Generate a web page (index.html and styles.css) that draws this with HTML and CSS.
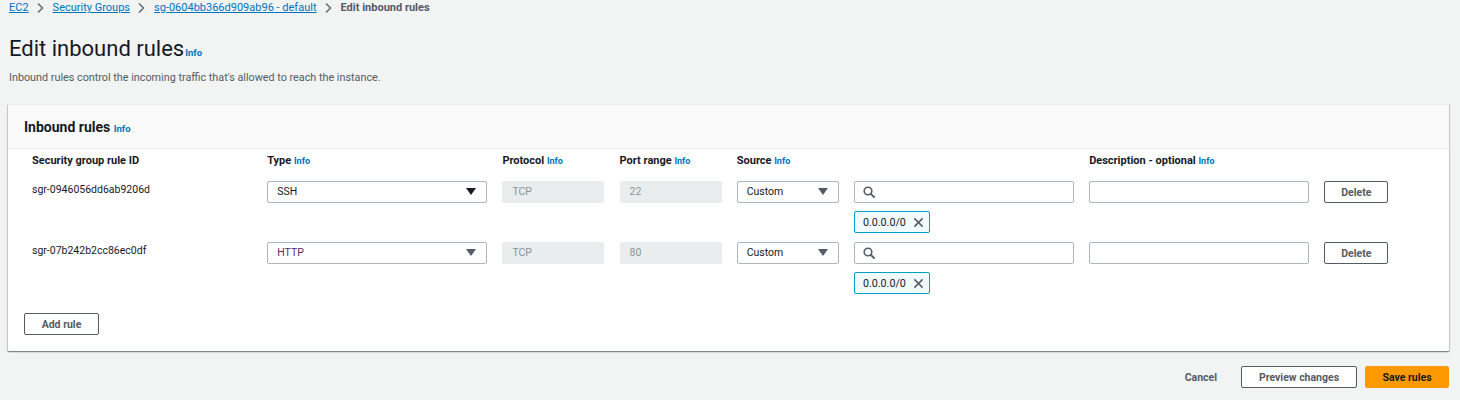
FILE: index.html
```html
<!DOCTYPE html>
<html lang="en">
<head>
<meta charset="utf-8">
<title>Edit inbound rules</title>
<link rel="stylesheet" href="styles.css">
</head>
<body>
<div class="page">
  <nav class="crumbs">
    <a class="crumb-link" href="#">EC2</a>
    <svg class="chev" viewBox="0 0 8 12" width="8" height="12"><path d="M2 1.5 L6.5 6 L2 10.5" fill="none" stroke="#687078" stroke-width="1.6"/></svg>
    <a class="crumb-link" href="#">Security Groups</a>
    <svg class="chev" viewBox="0 0 8 12" width="8" height="12"><path d="M2 1.5 L6.5 6 L2 10.5" fill="none" stroke="#687078" stroke-width="1.6"/></svg>
    <a class="crumb-link" href="#">sg-0604bb366d909ab96 - default</a>
    <svg class="chev" viewBox="0 0 8 12" width="8" height="12"><path d="M2 1.5 L6.5 6 L2 10.5" fill="none" stroke="#687078" stroke-width="1.6"/></svg>
    <span class="crumb-current">Edit inbound rules</span>
  </nav>

  <h1 class="title">Edit inbound rules<a class="info info-title" href="#">Info</a></h1>
  <p class="lead">Inbound rules control the incoming traffic that's allowed to reach the instance.</p>

  <section class="panel">
    <header class="panel-head">
      <h2 class="panel-title">Inbound rules <a class="info" href="#">Info</a></h2>
    </header>
    <div class="panel-body">
      <div class="rules">
        <div class="th">Security group rule ID</div>
        <div class="th">Type <a class="info" href="#">Info</a></div>
        <div class="th">Protocol <a class="info" href="#">Info</a></div>
        <div class="th">Port range <a class="info" href="#">Info</a></div>
        <div class="th th-source">Source <a class="info" href="#">Info</a></div>
        <div class="th th-desc">Description - optional <a class="info" href="#">Info</a></div>

        <div class="cell rule-id">sgr-0946056dd6ab9206d</div>
        <div class="cell"><div class="select">SSH<svg class="caret" viewBox="0 0 10 8" width="10" height="8"><path d="M0 0 H10 L5 7 Z" fill="#16191f"/></svg></div></div>
        <div class="cell"><div class="input disabled">TCP</div></div>
        <div class="cell"><div class="input disabled">22</div></div>
        <div class="cell"><div class="select">Custom<svg class="caret" viewBox="0 0 10 8" width="10" height="8"><path d="M0 0 H10 L5 7 Z" fill="#545b64"/></svg></div></div>
        <div class="cell stack">
          <div class="input search"><svg class="mag" viewBox="0 0 12 12" width="12" height="12"><circle cx="5" cy="5" r="3.8" fill="none" stroke="#545b64" stroke-width="1.6"/><path d="M7.8 7.8 L11 11" stroke="#545b64" stroke-width="1.8" stroke-linecap="round"/></svg></div>
          <div class="token">0.0.0.0/0<svg class="x" viewBox="0 0 12 12" width="11" height="11"><path d="M1.5 1.5 L10.5 10.5 M10.5 1.5 L1.5 10.5" stroke="#545b64" stroke-width="1.6"/></svg></div>
        </div>
        <div class="cell"><div class="input"></div></div>
        <div class="cell"><button class="btn">Delete</button></div>

        <div class="cell rule-id">sgr-07b242b2cc86ec0df</div>
        <div class="cell"><div class="select select-http">HTTP<svg class="caret" viewBox="0 0 10 8" width="10" height="8"><path d="M0 0 H10 L5 7 Z" fill="#545b64"/></svg></div></div>
        <div class="cell"><div class="input disabled">TCP</div></div>
        <div class="cell"><div class="input disabled">80</div></div>
        <div class="cell"><div class="select">Custom<svg class="caret" viewBox="0 0 10 8" width="10" height="8"><path d="M0 0 H10 L5 7 Z" fill="#545b64"/></svg></div></div>
        <div class="cell stack">
          <div class="input search"><svg class="mag" viewBox="0 0 12 12" width="12" height="12"><circle cx="5" cy="5" r="3.8" fill="none" stroke="#545b64" stroke-width="1.6"/><path d="M7.8 7.8 L11 11" stroke="#545b64" stroke-width="1.8" stroke-linecap="round"/></svg></div>
          <div class="token">0.0.0.0/0<svg class="x" viewBox="0 0 12 12" width="11" height="11"><path d="M1.5 1.5 L10.5 10.5 M10.5 1.5 L1.5 10.5" stroke="#545b64" stroke-width="1.6"/></svg></div>
        </div>
        <div class="cell"><div class="input"></div></div>
        <div class="cell"><button class="btn">Delete</button></div>
      </div>
      <button class="btn btn-add">Add rule</button>
    </div>
  </section>

  <div class="actions">
    <button class="btn-link">Cancel</button>
    <button class="btn btn-preview">Preview changes</button>
    <button class="btn btn-primary">Save rules</button>
  </div>
</div>
</body>
</html>
```

FILE: styles.css
```css
* { box-sizing: border-box; }
html, body { margin: 0; padding: 0; }
body {
  background: #f2f3f3;
  font-family: Roboto, "Liberation Sans", sans-serif;
  color: #16191f;
  font-size: 11px;
}
.page { padding: 0 11px 0 8px; }

.crumbs {
  display: flex;
  align-items: center;
  height: 15px;
  padding-left: 1px;
  font-size: 11px;
}
.crumb-link { color: #0073bb; text-decoration: underline; }
.chev { margin: 0 9px 0 7px; }
.crumb-current { color: #545b64; font-weight: 700; }

.title {
  margin: 20px 0 0 0;
  font-size: 22px;
  font-weight: 400;
  line-height: 28px;
  padding-left: 1px;
}
.info { color: #0073bb; font-weight: 700; font-size: 9px; text-decoration: none; }
.info-title { font-size: 9.5px; margin-left: 1px; }

.lead {
  margin: 3px 0 0 0;
  line-height: 16px;
  color: #545b64;
  font-size: 10.8px;
  padding-left: 1px;
}

.panel {
  margin-top: 18px;
  background: #fff;
  box-shadow: 0 1px 1px 0 rgba(0,28,36,.3), 1px 1px 1px 0 rgba(0,28,36,.15), -1px 1px 1px 0 rgba(0,28,36,.15);
  border-top: 1px solid #eaeded;
}
.panel-head {
  background: #fafafa;
  border-bottom: 1px solid #eaeded;
  height: 44px;
  display: flex;
  align-items: center;
  padding-left: 16px;
}
.panel-title { margin: 0; font-size: 14px; font-weight: 700; }
.panel-title .info { font-size: 9.5px; }

.panel-body { padding: 2px 16px 16px 16px; }

.rules {
  display: grid;
  grid-template-columns: 220px 220px 102px 102px 102px 220px 220px 64px;
  column-gap: 15.2px;
  margin-left: 8px;
}
.th {
  font-weight: 700;
  font-size: 11px;
  height: 20px;
  line-height: 16px;
  padding-top: 2px;
  margin-bottom: 10px;
}
.th-source { grid-column: span 2; }
.th-desc { grid-column: span 2; }

.cell { margin-bottom: 9px; }
.rule-id { font-size: 10.5px; line-height: 16px; padding-top: 1px; }
.stack { display: flex; flex-direction: column; gap: 8px; align-items: flex-start; }

.input, .select {
  height: 22px;
  border: 1px solid #aab7b8;
  border-radius: 2px;
  background: #fff;
  font-size: 10.5px;
  line-height: 20px;
  padding: 0 9px;
  width: 100%;
}
.select { display: flex; align-items: center; justify-content: space-between; padding-right: 10px; }
.select-http { color: #5a2a6b; }
.disabled { background: #eaeded; border-color: #eaeded; color: #879596; }
.search { display: flex; align-items: center; padding-left: 8px; }

.token {
  display: flex;
  align-items: center;
  height: 22px;
  padding: 0 5px 0 8px;
  border: 1px solid #00a1c9;
  border-radius: 2px;
  background: #f1faff;
  font-size: 10.7px;
  gap: 7px;
}

.btn {
  font-family: inherit;
  height: 22px;
  border: 1px solid #545b64;
  border-radius: 2px;
  background: #fff;
  color: #545b64;
  font-weight: 700;
  font-size: 10.5px;
  padding: 0 14px;
  cursor: pointer;
}
.rules .btn { width: 64px; padding: 0; }
.btn-add { margin-top: 10px; width: 75px; padding: 0; color: #545b64; }

.actions {
  display: flex;
  justify-content: flex-end;
  align-items: center;
  margin-top: 15px;
  gap: 8px;
}
.btn-link {
  font-family: inherit;
  background: none;
  border: none;
  color: #545b64;
  font-weight: 700;
  font-size: 10.5px;
  padding: 0 16px;
  height: 22px;
}
.btn-preview { width: 116px; padding: 0; }
.btn-primary { width: 84px; padding: 0; background: #ff9900; border-color: #ff9900; color: #16191f; }
```
